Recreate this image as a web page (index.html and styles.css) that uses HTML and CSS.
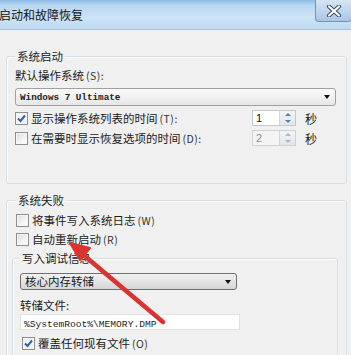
FILE: index.html
```html
<!DOCTYPE html>
<html lang="zh-CN">
<head>
    <meta charset="UTF-8">
    <title>启动和故障恢复</title>
    <link rel="stylesheet" href="styles.css">
</head>
<body>
    <div id="dialog">
        <div class="titlebar">
            <span class="title">启动和故障恢复</span>
            <span class="closeBtn">
                <svg width="16" height="12" viewBox="0 0 16 12">
                    <path d="M3 1.5 L13 10.5 M13 1.5 L3 10.5" stroke="#3b4f66" stroke-width="4.2" stroke-linecap="round"/>
                    <path d="M3 1.5 L13 10.5 M13 1.5 L3 10.5" stroke="#ffffff" stroke-width="2.2" stroke-linecap="round"/>
                </svg>
            </span>
        </div>

        <div class="content">
            <fieldset class="group startup">
                <legend>系统启动</legend>
                <div class="label">默认操作系统<span class="key">(S):</span></div>
                <div class="select wide">
                    <span class="mono bold">Windows 7 Ultimate</span>
                    <span class="arrow"></span>
                </div>
                <div class="row">
                    <div class="checkLabel">
                        <span class="check checked"></span>
                        <span>显示操作系统列表的时间<span class="key">(T):</span></span>
                    </div>
                    <div class="spin">
                        <span class="spinValue">1</span>
                        <span class="spinBtns"><i class="up"></i><i class="down"></i></span>
                    </div>
                    <span class="unit">秒</span>
                </div>
                <div class="row">
                    <div class="checkLabel">
                        <span class="check"></span>
                        <span>在需要时显示恢复选项的时间<span class="key">(D):</span></span>
                    </div>
                    <div class="spin disabled">
                        <span class="spinValue">2</span>
                        <span class="spinBtns"><i class="up"></i><i class="down"></i></span>
                    </div>
                    <span class="unit">秒</span>
                </div>
            </fieldset>

            <fieldset class="group failure">
                <legend>系统失败</legend>
                <div class="row first">
                    <div class="checkLabel">
                        <span class="check"></span>
                        <span>将事件写入系统日志<span class="key">(W)</span></span>
                    </div>
                </div>
                <div class="row second">
                    <div class="checkLabel">
                        <span class="check"></span>
                        <span>自动重新启动<span class="key">(R)</span></span>
                    </div>
                </div>
                <fieldset class="group debug">
                    <legend>写入调试信息</legend>
                    <div class="select narrow">
                        <span>核心内存转储</span>
                        <span class="arrow"></span>
                    </div>
                    <div class="label dumpLabel">转储文件:</div>
                    <div class="textbox"><span class="mono">%SystemRoot%\MEMORY.DMP</span></div>
                    <div class="row overwrite">
                        <div class="checkLabel">
                            <span class="check checked"></span>
                            <span>覆盖任何现有文件<span class="key">(O)</span></span>
                        </div>
                    </div>
                </fieldset>
            </fieldset>
        </div>

        <svg class="redArrow" width="351" height="355" viewBox="0 0 351 355">
            <path d="M163 322 L80 252" stroke="#d93431" stroke-width="4.5" stroke-linecap="round"/>
            <path d="M70 243 L90 248 L80 260 Z" fill="#d93431" stroke="#d93431" stroke-width="2" stroke-linejoin="round"/>
        </svg>
    </div>
</body>
</html>
```

FILE: styles.css
```css
body {
    margin: 0;
    padding: 0;
    background-color: #f0f0f0;
    font-family: "Noto Sans CJK SC", "Noto Sans", sans-serif;
    font-size: 11.5px;
    color: #1a1a1a;
    overflow: hidden;
}
#dialog {
    position: relative;
    width: 351px;
    height: 355px;
    overflow: hidden;
    background-color: #f0f0f0;
}
.titlebar {
    height: 30px;
    display: flex;
    align-items: flex-start;
    justify-content: space-between;
    background: linear-gradient(180deg, #8dbbe6 0%, #b9d7f1 18%, #cde3f6 60%, #bfdaf2 100%);
    border-bottom: 1px solid #a7c3dd;
    box-sizing: border-box;
}
.title {
    margin-left: -1px;
    line-height: 30px;
    font-size: 12px;
    color: #111;
}
.closeBtn {
    width: 37px;
    height: 22px;
    margin-right: -1px;
    display: flex;
    align-items: center;
    justify-content: center;
    border: 1px solid #7a94b0;
    border-top: none;
    border-radius: 0 0 4px 4px;
    background: linear-gradient(180deg, #d5e5f4 0%, #bfd6ee 50%, #a9c6e6 100%);
    box-sizing: border-box;
}
.content {
    padding: 18px 4px 0 6px;
}
.group {
    margin: 0;
    border: 1px solid #d5dfe5;
    border-radius: 3px;
    box-shadow: inset 1px 1px 0 #ffffff;
}
.group legend {
    padding: 0 2px;
    line-height: 16px;
    font-size: 11.5px;
    color: #222;
}
.startup {
    padding: 0 10px 37px 8px;
}
.failure {
    margin-top: 8px;
    padding: 0 8px 20px 9px;
}
.debug {
    margin: 3px 0 0 -4px;
    padding: 0 8px 10px 7px;
}
.label {
    line-height: 16px;
}
.key {
    margin-left: 2px;
    font-size: 10.5px;
    letter-spacing: 0.5px;
    color: #333;
}
.startup .label {
    margin-top: 3px;
}
.select {
    display: flex;
    align-items: center;
    justify-content: space-between;
    border: 1px solid #7b7b7b;
    border-radius: 3px;
    padding: 0 4px 0 4px;
    box-sizing: border-box;
}
.wide {
    margin-top: 4px;
    height: 18px;
    width: 321px;
    background: linear-gradient(180deg, #fbfbfb 0%, #f1f1f1 50%, #e6e6e6 100%);
    border-color: #a0a0a0;
}
.narrow {
    margin-top: 7px;
    height: 17px;
    width: 217px;
    background: linear-gradient(180deg, #f2f2f2 0%, #e4e4e4 50%, #d6d6d6 100%);
    border-color: #6f6f6f;
    line-height: 15px;
}
.arrow {
    width: 0;
    height: 0;
    border-left: 3.5px solid transparent;
    border-right: 3.5px solid transparent;
    border-top: 4px solid #111;
    margin-right: 1px;
}
.mono {
    font-family: "Liberation Mono", "DejaVu Sans Mono", monospace;
    font-size: 9.6px;
    color: #222;
}
.bold {
    font-weight: bold;
    font-size: 9.3px;
}
.row {
    display: flex;
    align-items: center;
    height: 16px;
    margin-top: 4px;
}
.failure .second {
    margin-top: 3px;
}
.checkLabel {
    display: flex;
    align-items: center;
    width: 237px;
}
.check {
    width: 11px;
    height: 11px;
    margin-right: 3px;
    border: 1px solid #8f8f8f;
    background: linear-gradient(135deg, #dcdcdc 0%, #f4f4f4 60%, #ffffff 100%);
    box-shadow: inset 0 0 0 1px #f6f6f6;
    flex: none;
}
.check.checked {
    background: #f4f4f4 url("data:image/svg+xml;utf8,<svg xmlns='http://www.w3.org/2000/svg' width='11' height='11'><path d='M2 5.5 L4.5 8 L9 2.5' fill='none' stroke='%232f5fb3' stroke-width='2'/></svg>") no-repeat center;
}
.spin {
    display: flex;
    width: 44px;
    height: 16px;
    border: 1px solid #c4c9cf;
    background: #ffffff;
    box-sizing: border-box;
}
.spinValue {
    flex: 1;
    padding-left: 3px;
    line-height: 14px;
    font-family: "Liberation Sans", sans-serif;
    font-size: 11px;
    color: #111;
}
.spinBtns {
    width: 15px;
    display: flex;
    flex-direction: column;
    background: linear-gradient(180deg, #f4f4f4 0%, #dfe6ee 100%);
    border-left: 1px solid #d4d8dd;
}
.spinBtns i {
    flex: 1;
    display: flex;
    align-items: center;
    justify-content: center;
}
.spinBtns .up::after {
    content: "";
    border-left: 3px solid transparent;
    border-right: 3px solid transparent;
    border-bottom: 3px solid #5a7e9c;
}
.spinBtns .down::after {
    content: "";
    border-left: 3px solid transparent;
    border-right: 3px solid transparent;
    border-top: 3px solid #5a7e9c;
}
.spin.disabled {
    background: #f4f4f4;
    border-color: #cfd2d5;
}
.spin.disabled .spinValue {
    color: #8a8a8a;
}
.spin.disabled .spinBtns i::after {
    border-bottom-color: #b5b5b5;
    border-top-color: #b5b5b5;
}
.unit {
    margin-left: 9px;
    font-size: 12px;
}
.dumpLabel {
    margin-top: 7px;
}
.textbox {
    margin-top: 1px;
    width: 220px;
    height: 16px;
    border: 1px solid #e2e3e5;
    background: #ffffff;
    padding-left: 3px;
    line-height: 14px;
    box-sizing: border-box;
}
.overwrite {
    margin-top: 5px;
    margin-left: 2px;
}
.redArrow {
    position: absolute;
    left: 0;
    top: 0;
    pointer-events: none;
}
```
